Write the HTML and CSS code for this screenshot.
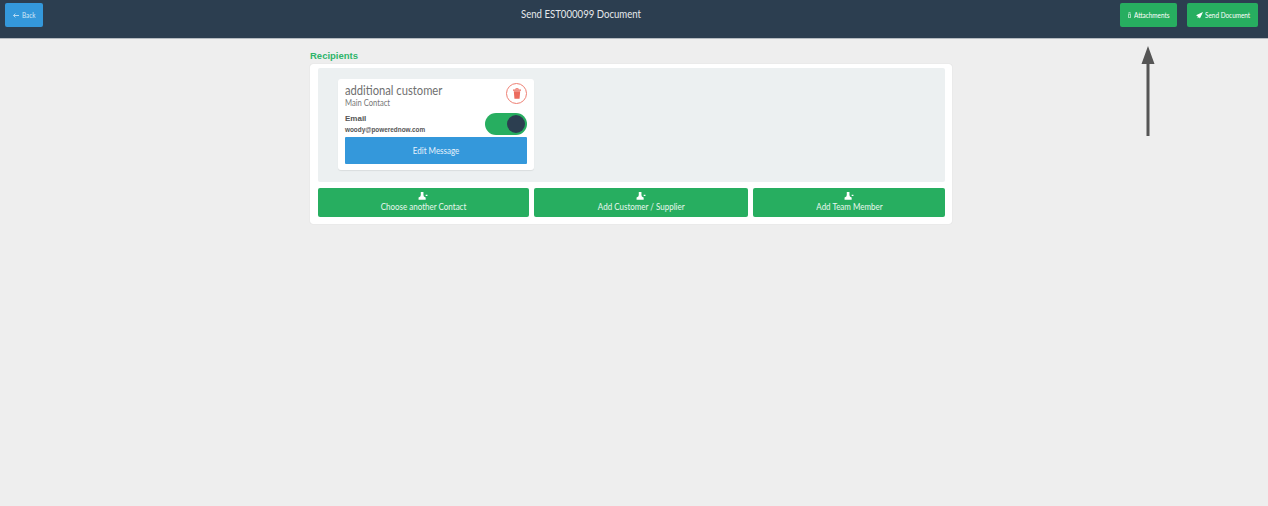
FILE: index.html
```html
<!DOCTYPE html>
<html lang="en">
<head>
<meta charset="utf-8">
<title>Send Document</title>
<link rel="stylesheet" href="styles.css">
</head>
<body>
<header class="topbar">
  <a class="btn btn-blue btn-back"><svg class="ico-arrow" viewBox="0 0 8 6"><path d="M3.200.6.700 3l2.500 2.400M.9 3H8" fill="none" stroke="currentColor" stroke-width="1.100"/></svg><span class="narrow-left">Back</span></a>
  <h1 class="title"><span class="narrow-left">Send EST000099 Document</span></h1>
  <div class="actions">
    <a class="btn btn-green btn-attach"><svg class="ico-clip" viewBox="0 0 4 8"><path d="M1 2V1.200a1 1 0 0 1 2 0V2M.7 3h2.600v4.600H.7z" fill="none" stroke="currentColor" stroke-width=".8"/></svg><span class="narrow-left">Attachments</span></a>
    <a class="btn btn-green btn-send"><svg class="ico-send" viewBox="0 0 8 8"><path d="M8 0 0 3.600l2 1.200L1.800 7l1.500-1 1.200 1.500z" fill="currentColor"/></svg><span class="narrow-left">Send Document</span></a>
  </div>
</header>
<svg class="pointer" viewBox="0 0 14 90"><path d="M7 0 13.500 18H8.500V90H5.500V18H.5z" fill="#555"/></svg>
<main class="content">
  <h2 class="heading">Recipients</h2>
  <section class="panel">
    <div class="well">
      <article class="contact">
        <div class="contact-top">
          <div>
            <div class="contact-name narrow-left">additional customer</div>
            <div class="contact-role narrow-left">Main Contact</div>
          </div>
          <span class="delete"><svg viewBox="0 0 10 13"><path d="M0 1.600h10V3H0zM3.200 1.600V0h3.600v1.600h-1V1H4.200v.6zM1 3.600h8L8.200 13H1.800z" fill="#ec6b5e"/></svg></span>
        </div>
        <div class="channel">
          <div>
            <div class="channel-label">Email</div>
            <div class="channel-value">woody@poweredno&#8203;w.com</div>
          </div>
          <span class="toggle"><span class="knob"></span></span>
        </div>
        <a class="edit"><span class="narrow">Edit Message</span></a>
      </article>
    </div>
    <div class="add-row">
      <a class="add"><svg class="ico-user" viewBox="0 0 11 9"><path d="M3 0h3v3.500L6.500 5 8.500 6.200V8.600H.5V6.200L2.500 5 3 3.500zM8.500 3h2v1.600h-2z" fill="currentColor"/></svg><span class="narrow">Choose another Contact</span></a>
      <a class="add"><svg class="ico-user" viewBox="0 0 11 9"><path d="M3 0h3v3.500L6.500 5 8.500 6.200V8.600H.5V6.200L2.500 5 3 3.500zM8.500 3h2v1.600h-2z" fill="currentColor"/></svg><span class="narrow">Add Customer / Supplier</span></a>
      <a class="add"><svg class="ico-user" viewBox="0 0 11 9"><path d="M3 0h3v3.500L6.500 5 8.500 6.200V8.600H.5V6.200L2.500 5 3 3.500zM8.500 3h2v1.600h-2z" fill="currentColor"/></svg><span class="narrow">Add Team Member</span></a>
    </div>
  </section>
</main>
</body>
</html>
```

FILE: styles.css
```css
* { box-sizing: border-box; }
html, body { height: 100%; }
body {
  margin: 0;
  background: #eeeeee;
  font-family: Lato, "Open Sans", sans-serif;
  overflow: hidden;
}
.narrow {
  display: inline-block;
  transform: scaleX(.8);
  white-space: nowrap;
}
.narrow-left {
  display: inline-block;
  transform: scaleX(.8);
  transform-origin: left center;
  white-space: nowrap;
}
.topbar {
  display: flex;
  align-items: flex-start;
  justify-content: space-between;
  height: 39px;
  padding: 3px 10px 0 5px;
  background: #2c3e50;
  border-bottom: 1px solid #b4bac0;
  position: relative;
}
.btn {
  display: flex;
  align-items: center;
  height: 24px;
  border-radius: 2px;
  color: #fff;
  font-size: 8px;
  overflow: hidden;
}
.btn-blue { background: #3498db; }
.btn-green { background: #27ae60; }
.btn-back { width: 38px; gap: 3px; padding-left: 8px; color: #d3e8f7; }
.btn-attach { width: 57px; gap: 3px; padding-left: 8px; }
.btn-send { width: 71px; gap: 2px; padding-left: 9px; }
.actions { display: flex; gap: 10px; }
.ico-arrow { width: 6px; height: 5px; flex: none; }
.ico-clip { width: 3px; height: 6px; flex: none; }
.ico-send { width: 7px; height: 7px; flex: none; }
.title {
  position: absolute;
  left: 521px;
  top: 7px;
  margin: 0;
  color: #e6e9ec;
  font-size: 12px;
  line-height: 14px;
  font-weight: 400;
  white-space: nowrap;
}
.pointer {
  position: absolute;
  left: 1141px;
  top: 46px;
  width: 14px;
  height: 90px;
}
.content {
  width: 642px;
  margin-left: 310px;
}
.heading {
  margin: 11px 0 2px;
  color: #2fb56a;
  font-family: "Liberation Sans", Arial, sans-serif;
  font-size: 9.500px;
  line-height: 12px;
  font-weight: 700;
}
.panel {
  height: 160px;
  padding: 4px 7px 0 7.500px;
  background: #fff;
  border-radius: 3px;
  box-shadow: 0 0 1px rgba(0,0,0,.18);
}
.well {
  height: 114px;
  padding: 11px 0 0 20.500px;
  background: #ecf0f1;
  border-radius: 2px;
}
.contact {
  width: 196px;
  height: 91px;
  padding: 3px 7px 0;
  background: #fff;
  border-radius: 3px;
  box-shadow: 0 1px 1px rgba(0,0,0,.08);
}
.contact-top {
  display: flex;
  justify-content: space-between;
  align-items: flex-start;
  height: 31px;
}
.contact-name {
  display: block;
  color: #707070;
  font-size: 14px;
  line-height: 16px;
}
.contact-role {
  display: block;
  color: #777;
  font-size: 9.500px;
  line-height: 10px;
}
.delete {
  display: flex;
  align-items: center;
  justify-content: center;
  width: 21px;
  height: 21px;
  margin-top: 1px;
  border: 1px solid #ee7f73;
  border-radius: 50%;
}
.delete svg { width: 8px; height: 11px; }
.channel {
  display: flex;
  justify-content: space-between;
  align-items: flex-start;
  height: 24px;
}
.channel-label {
  color: #555;
  font-family: "Liberation Sans", Arial, sans-serif;
  font-size: 8px;
  font-weight: 700;
  line-height: 11px;
}
.channel-value {
  color: #555;
  font-family: "Liberation Sans", Arial, sans-serif;
  font-size: 6.400px;
  font-weight: 700;
  line-height: 10px;
  margin-top: 1px;
}
.toggle {
  display: block;
  position: relative;
  width: 42px;
  height: 22px;
  border-radius: 11px;
  background: #27ae60;
}
.knob {
  position: absolute;
  right: 2px;
  top: 2px;
  width: 18px;
  height: 18px;
  border-radius: 50%;
  background: #2c3e50;
}
.edit {
  display: flex;
  align-items: center;
  justify-content: center;
  height: 27px;
  padding-bottom: 2px;
  background: #3498db;
  color: #e6f2fb;
  font-size: 10px;
  border-radius: 1px;
}
.add-row {
  display: grid;
  grid-template-columns: 211.500fr 213.500fr 192fr;
  column-gap: 5.500px;
  margin-top: 6px;
}
.add {
  display: flex;
  flex-direction: column;
  align-items: center;
  height: 29px;
  padding-top: 4px;
  background: #27ae60;
  color: #fff;
  border-radius: 2px;
  font-size: 10px;
  line-height: 11px;
}
.add span { color: #e9f7ef; margin-top: 1px; }
.ico-user { width: 10px; height: 8px; display: block; }
```
